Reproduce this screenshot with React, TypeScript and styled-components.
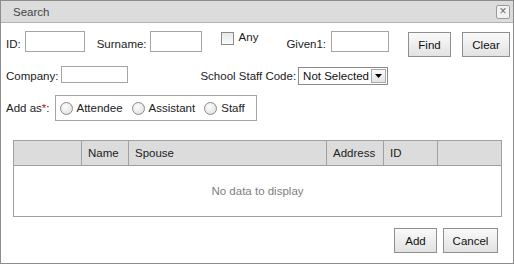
import styled, { createGlobalStyle } from "styled-components";

const GlobalStyle = createGlobalStyle`
  html, body {
    margin: 0;
    padding: 0;
    background: #ffffff;
  }
  * {
    box-sizing: border-box;
  }
`;

const columns = [
  { key: "blank", title: "", width: 68 },
  { key: "name", title: "Name", width: 47 },
  { key: "spouse", title: "Spouse", width: 198 },
  { key: "address", title: "Address", width: 57 },
  { key: "id", title: "ID", width: 54 },
  { key: "end", title: "", width: 0 },
];

const App = () => {
  return (
    <>
      <GlobalStyle />
      <Dialog>
        <TitleBar>
          <TitleText>Search</TitleText>
          <CloseButton>×</CloseButton>
        </TitleBar>
        <Body>
          <Row $top={8}>
            <Label>ID:</Label>
            <TextInput $width={60} $height={21} $left={4} />
            <Label $left={12}>Surname:</Label>
            <TextInput $width={52} $height={21} $left={3} />
            <CheckWrap $left={19}>
              <CheckBox />
              <CheckLabel>Any</CheckLabel>
            </CheckWrap>
            <Label $left={28}>Given1:</Label>
            <TextInput $width={58} $height={21} $left={5} />
            <Button $width={43} $left={19} $top={1}>
              Find
            </Button>
            <Button $width={48} $left={11} $top={1}>
              Clear
            </Button>
          </Row>
          <Row $top={9}>
            <Label>Company:</Label>
            <TextInput $width={67} $height={17} $left={3} />
            <Label $left={72}>School Staff Code:</Label>
            <Select>
              <SelectText>Not Selected</SelectText>
              <SelectArrow>
                <svg width="7" height="4" viewBox="0 0 7 4">
                  <path d="M0 0 L7 0 L3.5 4 Z" fill="#000" />
                </svg>
              </SelectArrow>
            </Select>
          </Row>
          <Row $top={10}>
            <Label>
              Add as<Required>*</Required>:
            </Label>
            <RadioGroup>
              <RadioItem>
                <Radio />
                <span>Attendee</span>
              </RadioItem>
              <RadioItem>
                <Radio />
                <span>Assistant</span>
              </RadioItem>
              <RadioItem>
                <Radio />
                <span>Staff</span>
              </RadioItem>
            </RadioGroup>
          </Row>
          <Grid>
            <GridHeader>
              {columns.map((col) => (
                <HeaderCell key={col.key} $width={col.width}>
                  {col.title}
                </HeaderCell>
              ))}
            </GridHeader>
            <GridBody>No data to display</GridBody>
          </Grid>
          <Footer>
            <Button $width={43}>Add</Button>
            <Button $width={55} $left={6}>
              Cancel
            </Button>
          </Footer>
        </Body>
      </Dialog>
    </>
  );
};

const Dialog = styled.div`
  width: 514px;
  height: 264px;
  border: 1px solid #8c8c8c;
  background: #ffffff;
  display: flex;
  flex-direction: column;
  font-family: "Liberation Sans", Arial, sans-serif;
  font-size: 11.5px;
  color: #222222;
`;

const TitleBar = styled.div`
  height: 22px;
  flex: none;
  background: #dcdcdc;
  border-bottom: 1px solid #b4b4b4;
  display: flex;
  align-items: center;
  justify-content: space-between;
  padding: 0 3px 0 12px;
`;

const TitleText = styled.span`
  color: #444444;
`;

const CloseButton = styled.div`
  width: 14px;
  height: 14px;
  border: 1px solid #9a9a9a;
  border-radius: 2px;
  background: #f2f2f2;
  color: #666666;
  font-size: 12px;
  line-height: 11px;
  text-align: center;
`;

const Body = styled.div`
  flex: 1;
  display: flex;
  flex-direction: column;
  padding: 0 0 0 5px;
`;

const Row = styled.div<{ $top?: number }>`
  display: flex;
  align-items: center;
  margin-top: ${(p) => p.$top ?? 0}px;
`;

const Label = styled.span<{ $left?: number }>`
  margin-left: ${(p) => p.$left ?? 0}px;
  white-space: nowrap;
`;

const Required = styled.span`
  color: #e00000;
`;

const TextInput = styled.input.attrs({ type: "text" })<{
  $width: number;
  $height: number;
  $left?: number;
}>`
  width: ${(p) => p.$width}px;
  height: ${(p) => p.$height}px;
  margin: 0 0 0 ${(p) => p.$left ?? 0}px;
  border: 1px solid #a5a5a5;
  background: #ffffff;
  padding: 0 2px;
  outline: none;
  align-self: flex-start;
  flex: none;
`;

const CheckWrap = styled.label<{ $left?: number }>`
  display: flex;
  align-items: center;
  gap: 5px;
  margin-left: ${(p) => p.$left ?? 0}px;
  align-self: flex-start;
`;

const CheckBox = styled.span`
  width: 13px;
  height: 13px;
  margin-top: 1px;
  border: 1px solid #8a8a8a;
  background: linear-gradient(#e8e8e8, #fbfbfb);
`;

const CheckLabel = styled.span`
  margin-top: -2px;
`;

const Button = styled.div<{ $width: number; $left?: number; $top?: number }>`
  width: ${(p) => p.$width}px;
  height: 25px;
  flex: none;
  margin-left: ${(p) => p.$left ?? 0}px;
  margin-top: ${(p) => p.$top ?? 0}px;
  align-self: flex-start;
  border: 1px solid #8f8f8f;
  background: linear-gradient(#fafafa, #e2e2e2);
  display: flex;
  align-items: center;
  justify-content: center;
  color: #111111;
`;

const Select = styled.div`
  width: 90px;
  height: 18px;
  flex: none;
  margin-left: 2px;
  margin-top: 1px;
  align-self: flex-start;
  border: 1px solid #8a8a8a;
  background: #ffffff;
  display: flex;
  align-items: center;
  justify-content: space-between;
  padding: 0 1px 0 4px;
`;

const SelectText = styled.span`
  color: #111111;
  white-space: nowrap;
`;

const SelectArrow = styled.span`
  width: 15px;
  height: 14px;
  flex: none;
  border: 1px solid #a8a8a8;
  background: linear-gradient(#fafafa, #e4e4e4);
  display: flex;
  align-items: center;
  justify-content: center;
`;

const RadioGroup = styled.div`
  width: 202px;
  height: 26px;
  margin-left: 5px;
  border: 1px solid #a5a5a5;
  display: flex;
  align-items: center;
  padding-left: 4px;
  gap: 9px;
`;

const RadioItem = styled.label`
  display: flex;
  align-items: center;
  gap: 4px;
`;

const Radio = styled.span`
  width: 13px;
  height: 13px;
  border-radius: 50%;
  border: 1px solid #8a8a8a;
  background: radial-gradient(circle at 40% 35%, #fdfdfd, #dcdcdc);
`;

const Grid = styled.div`
  width: 489px;
  height: 77px;
  margin: 19px 0 0 7px;
  border: 1px solid #a0a0a0;
  display: flex;
  flex-direction: column;
`;

const GridHeader = styled.div`
  height: 25px;
  flex: none;
  display: flex;
  background: #dcdcdc;
  border-bottom: 1px solid #a0a0a0;
`;

const HeaderCell = styled.div<{ $width: number }>`
  width: ${(p) => (p.$width ? `${p.$width}px` : "auto")};
  flex: ${(p) => (p.$width ? "none" : "1")};
  border-right: ${(p) => (p.$width ? "1px solid #a0a0a0" : "none")};
  display: flex;
  align-items: center;
  padding-left: 6px;
  color: #222222;
`;

const GridBody = styled.div`
  flex: 1;
  display: flex;
  align-items: center;
  justify-content: center;
  color: #808080;
`;

const Footer = styled.div`
  display: flex;
  margin: 11px 0 0 388px;
`;

export default App;
